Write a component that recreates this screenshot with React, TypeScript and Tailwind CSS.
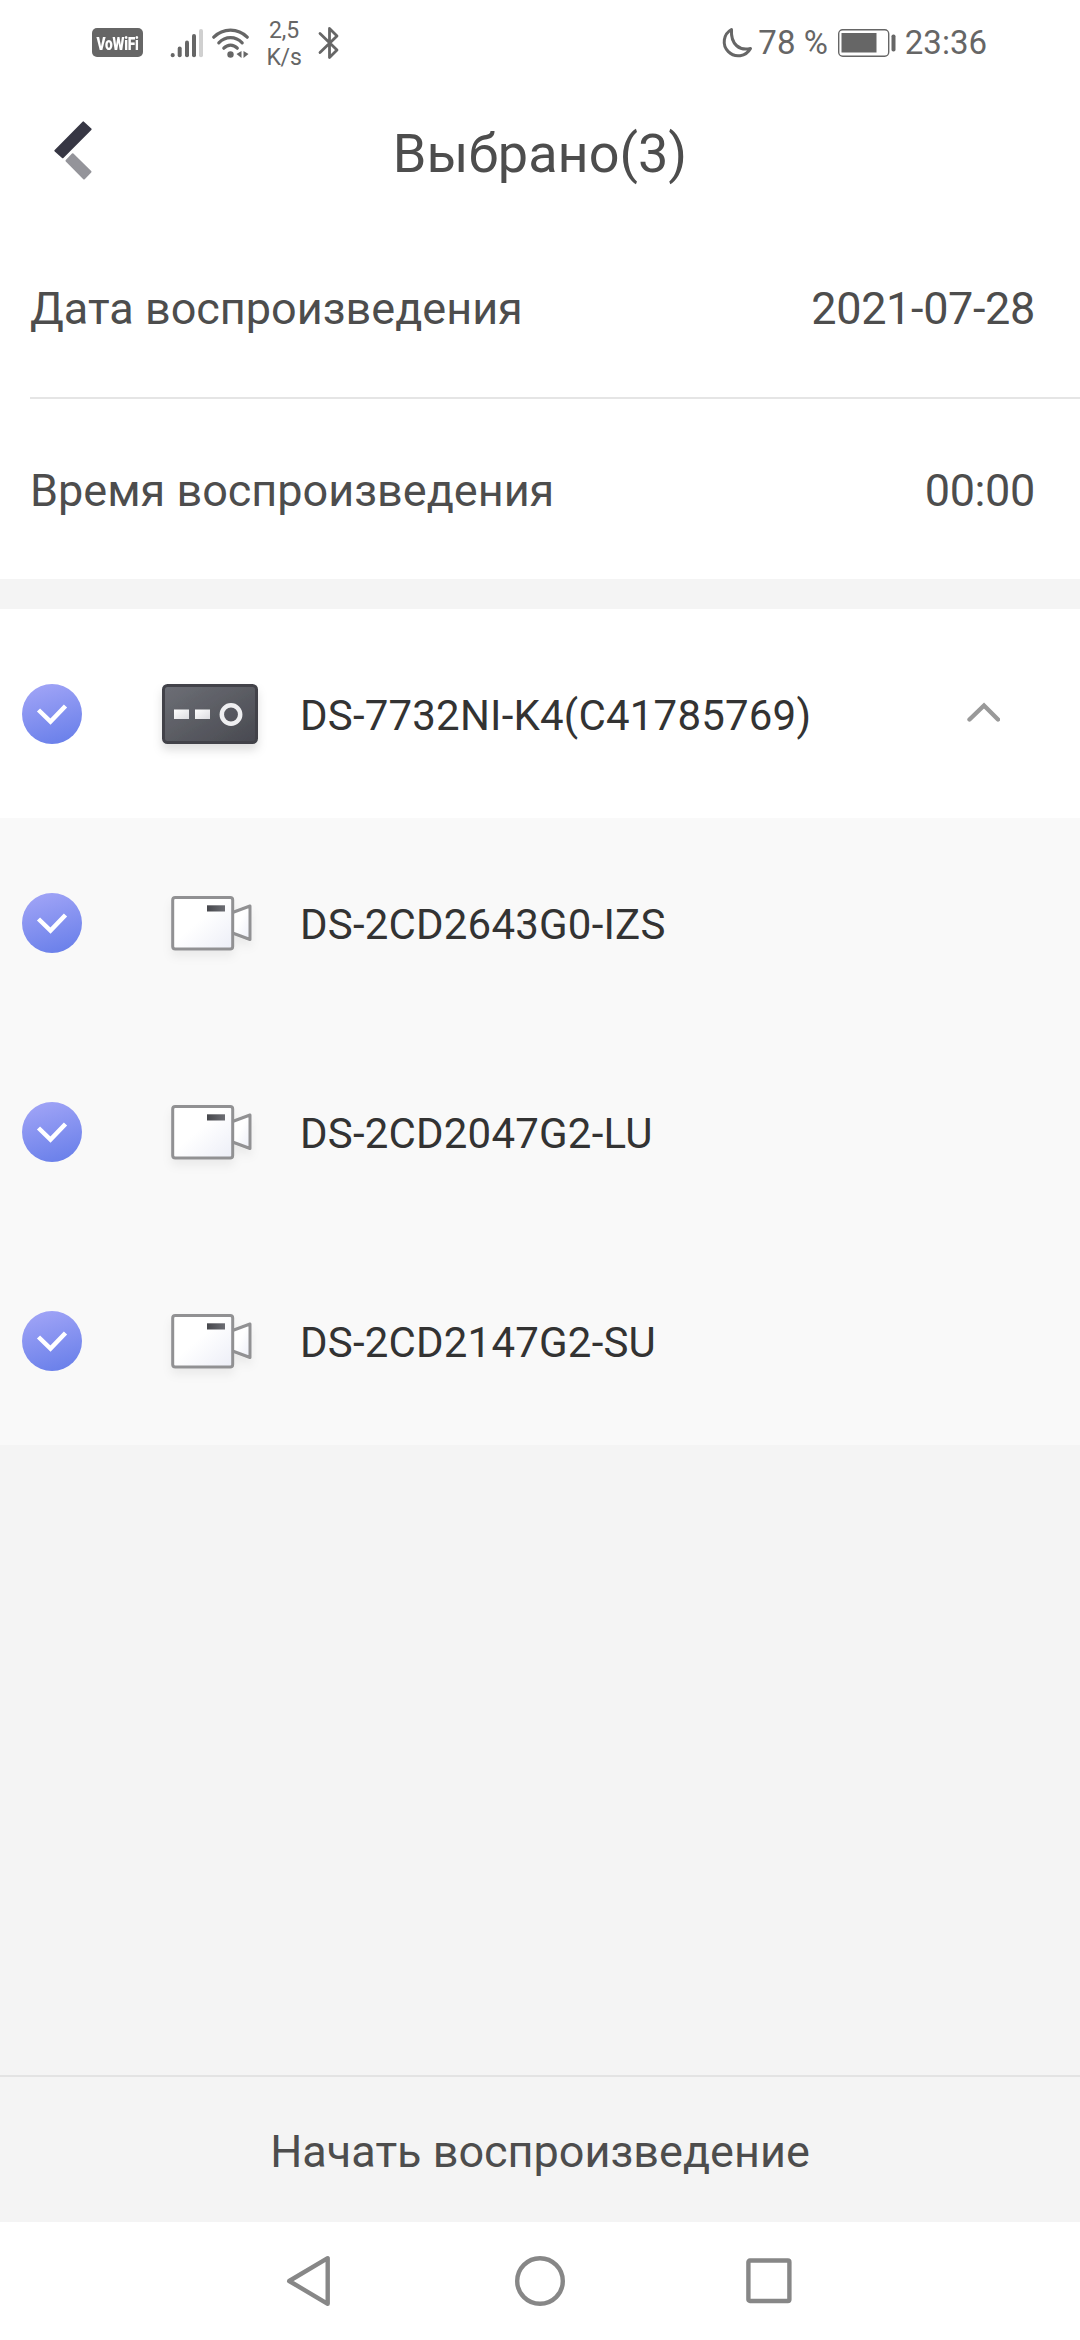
type Device = {
  name: string;
  kind: "recorder" | "camera";
};

const recorder: Device = { name: "DS-7732NI-K4(C41785769)", kind: "recorder" };

const cameras: Device[] = [
  { name: "DS-2CD2643G0-IZS", kind: "camera" },
  { name: "DS-2CD2047G2-LU", kind: "camera" },
  { name: "DS-2CD2147G2-SU", kind: "camera" },
];

function SignalIcon() {
  return (
    <svg width="34" height="32" viewBox="0 0 34 32" aria-hidden="true">
      <g strokeWidth="4" strokeLinecap="round" stroke="#666">
        <path d="M2.7 28v.2" />
        <path d="M9.7 21.5v6.7" />
        <path d="M17 15.5v12.7" />
        <path d="M24 9v19.2" />
        <path d="M31 4v24.2" stroke="#d0d0d0" />
      </g>
    </svg>
  );
}

function WifiIcon() {
  return (
    <svg width="37" height="32" viewBox="0 0 37 32" fill="none" aria-hidden="true">
      <g stroke="#666" strokeWidth="3.2" strokeLinecap="round">
        <path d="M1.8 10.2C11 0.8 26 0.8 35.2 10.2" />
        <path d="M6.8 15.8C13.5 9 23.5 9 30.2 15.8" />
        <path d="M11.8 21.2C15.8 17 21.3 17 25.3 21.2" />
      </g>
      <circle cx="18.5" cy="27.5" r="3.2" fill="#666" />
      <path d="M29.5 24v7l-5-4zM31.5 24l5 3-5 4z" fill="#666" />
    </svg>
  );
}

function BluetoothIcon() {
  return (
    <svg width="22" height="34" viewBox="0 0 22 34" fill="none" aria-hidden="true">
      <path
        d="M2 7.5 19 24 11.5 31.5V2.5L19 10 2 26.5"
        stroke="#666"
        strokeWidth="2.8"
        strokeLinecap="round"
        strokeLinejoin="round"
      />
    </svg>
  );
}

function MoonIcon() {
  return (
    <svg width="32" height="32" viewBox="0 0 32 32" fill="none" aria-hidden="true">
      <path
        d="M10.5 2.5A14 14 0 1 0 29.5 21.5C19 24 9.5 18 10.5 2.5Z"
        stroke="#666"
        strokeWidth="3"
        strokeLinejoin="round"
      />
    </svg>
  );
}

function BatteryIcon() {
  return (
    <svg width="58" height="28" viewBox="0 0 58 28" fill="none" aria-hidden="true">
      <rect x="0.7" y="0.7" width="50" height="26.6" rx="4" stroke="#666" strokeWidth="1.4" />
      <rect x="3.5" y="4" width="35" height="19.5" fill="#666" />
      <rect x="53.5" y="5.5" width="4" height="17" rx="1.8" fill="#666" />
    </svg>
  );
}

function StatusBar() {
  return (
    <div className="flex h-[85px] items-center pl-[92px] pr-[93px] text-[#666]">
      <div className="flex h-[29px] w-[51px] items-center justify-center rounded-[5px] bg-[#666]">
        <span className="scale-x-[0.98] scale-y-[1.35] text-[14px] font-black leading-[20px] tracking-[-0.2px] text-white">
          VoWiFi
        </span>
      </div>
      <div className="ml-[27px]">
        <SignalIcon />
      </div>
      <div className="ml-2">
        <WifiIcon />
      </div>
      <div className="ml-[17px] w-9 pt-[3px] text-center text-[23px] leading-[27px] tracking-[-0.2px]">
        <div>2,5</div>
        <div>K/s</div>
      </div>
      <div className="ml-4">
        <BluetoothIcon />
      </div>
      <div className="ml-auto flex items-center">
        <MoonIcon />
        <span className="ml-[5px] pt-px text-[33px]">78 %</span>
        <div className="ml-2.5">
          <BatteryIcon />
        </div>
        <span className="ml-[9px] pt-px text-[33px]">23:36</span>
      </div>
    </div>
  );
}

function Header() {
  return (
    <header className="relative flex h-[138px] items-center justify-center">
      <button type="button" aria-label="Назад" className="absolute left-[54px] top-[35px]">
        <svg width="40" height="62" viewBox="0 0 40 62" strokeWidth="2" strokeLinejoin="round">
          <path d="M18.7 34.2 12.5 40.7 30 58.5 36.5 51.7z" fill="#94949a" stroke="#94949a" />
          <path d="M29.3 2.4 36.6 9.3 8.7 37.3 1.4 30.7z" fill="#373744" stroke="#373744" />
        </svg>
      </button>
      <h1 className="text-[54px] leading-none text-[#4d4d4d]">Выбрано(3)</h1>
    </header>
  );
}

function SettingRow({ label, value }: { label: string; value: string }) {
  return (
    <div className="flex h-full items-center justify-between pr-[45px]">
      <span>{label}</span>
      <span className="tracking-[-0.35px]">{value}</span>
    </div>
  );
}

function CheckBadge() {
  return (
    <svg width="60" height="60" viewBox="0 0 60 60" fill="none" aria-hidden="true">
      <defs>
        <linearGradient id="badge" x1="0.35" y1="0" x2="0.65" y2="1">
          <stop offset="0" stopColor="#9fa3f6" />
          <stop offset="1" stopColor="#6a80ea" />
        </linearGradient>
      </defs>
      <circle cx="30" cy="30" r="30" fill="url(#badge)" />
      <path d="M16.5 26 28.5 37.5 43.5 22" stroke="#fff" strokeWidth="4.5" />
    </svg>
  );
}

function RecorderIcon() {
  return (
    <svg width="120" height="90" viewBox="0 0 120 90" fill="none" aria-hidden="true">
      <defs>
        <linearGradient id="recorder" x1="0" y1="0" x2="1" y2="1">
          <stop offset="0" stopColor="#6d6f76" />
          <stop offset="1" stopColor="#484950" />
        </linearGradient>
        <linearGradient id="slot" x1="0" y1="0" x2="1" y2="1">
          <stop offset="0" stopColor="#fff" />
          <stop offset="1" stopColor="#dcdce0" />
        </linearGradient>
        <filter id="recorder-shadow" x="-20%" y="-20%" width="140%" height="160%">
          <feDropShadow dx="0" dy="6" stdDeviation="5" floodColor="#000" floodOpacity="0.13" />
        </filter>
      </defs>
      <rect
        x="13.5"
        y="16.5"
        width="93"
        height="57"
        rx="4"
        fill="url(#recorder)"
        stroke="#42434a"
        strokeWidth="3"
        filter="url(#recorder-shadow)"
      />
      <rect x="24" y="40.5" width="15" height="9.5" fill="url(#slot)" />
      <rect x="45" y="40.5" width="15" height="9.5" fill="url(#slot)" />
      <circle cx="81" cy="45.5" r="9.2" stroke="#efeff1" strokeWidth="4.5" />
    </svg>
  );
}

function CameraIcon() {
  return (
    <svg width="120" height="90" viewBox="0 0 120 90" fill="none" aria-hidden="true">
      <defs>
        <linearGradient id="camera" x1="0.2" y1="0.2" x2="1" y2="1">
          <stop offset="0.3" stopColor="#fff" />
          <stop offset="1" stopColor="#eceef7" />
        </linearGradient>
        <linearGradient id="camera-mark" x1="0" y1="0" x2="1" y2="0">
          <stop offset="0" stopColor="#46474c" />
          <stop offset="1" stopColor="#6c6d73" />
        </linearGradient>
        <filter id="camera-shadow" x="-20%" y="-20%" width="140%" height="160%">
          <feDropShadow dx="0" dy="6" stdDeviation="5" floodColor="#000" floodOpacity="0.06" />
        </filter>
      </defs>
      <g stroke="#919193" strokeWidth="3" strokeLinejoin="round" filter="url(#camera-shadow)">
        <path d="M82.5 34.5 100 28V61.5L82.5 55z" fill="url(#camera)" />
        <rect x="22.7" y="19.5" width="60" height="51.5" rx="2.5" fill="url(#camera)" />
      </g>
      <rect x="57" y="27.3" width="18" height="6.2" fill="url(#camera-mark)" />
    </svg>
  );
}

function DeviceRow({ device, expanded }: { device: Device; expanded?: boolean }) {
  return (
    <li className="flex h-[209px] items-center pl-[22px] pr-[80px]">
      <CheckBadge />
      <div className="ml-[68px]">
        {device.kind === "recorder" ? <RecorderIcon /> : <CameraIcon />}
      </div>
      <span className="ml-[30px] pt-[5px] text-[42px] leading-none tracking-[0.2px] text-[#333]">
        {device.name}
      </span>
      {expanded && (
        <svg className="ml-auto" width="34" height="24" viewBox="0 0 34 24" fill="none" aria-hidden="true">
          <path d="M3.5 17.5 18 3.5 32 17.5" stroke="#999" strokeWidth="4.4" strokeLinecap="round" />
        </svg>
      )}
    </li>
  );
}

function NavigationBar() {
  return (
    <nav className="flex h-[118px] items-center justify-center gap-[180px] bg-white">
      <svg width="50" height="52" viewBox="0 0 50 52" fill="none" stroke="#878787" strokeWidth="4.4" strokeLinejoin="round">
        <path d="M42.7 3.2V48.8L4.2 26z" />
      </svg>
      <svg width="50" height="52" viewBox="0 0 50 52" fill="none" stroke="#878787" strokeWidth="4.4">
        <circle cx="25" cy="26" r="22.8" />
      </svg>
      <svg width="50" height="52" viewBox="0 0 50 52" fill="none" stroke="#878787" strokeWidth="4.4">
        <rect x="3.4" y="5.5" width="41" height="40.5" rx="1.5" />
      </svg>
    </nav>
  );
}

export default function App() {
  return (
    <div className="flex h-[2340px] w-[1080px] flex-col overflow-hidden bg-[#f4f4f4] font-['Roboto',sans-serif]">
      <div className="bg-white">
        <StatusBar />
        <Header />
        <section className="pl-[30px] text-[45px] leading-none text-[#4d4d4d]">
          <div className="h-[176px] border-b-2 border-[#e5e5e5] pb-[3px]">
            <SettingRow label="Дата воспроизведения" value="2021-07-28" />
          </div>
          <div className="h-[180px] pt-[3px]">
            <SettingRow label="Время воспроизведения" value="00:00" />
          </div>
        </section>
      </div>

      <ul className="mt-[30px] bg-white">
        <DeviceRow device={recorder} expanded />
      </ul>
      <ul className="bg-[#f9f9f9]">
        {cameras.map((camera) => (
          <DeviceRow key={camera.name} device={camera} />
        ))}
      </ul>

      <button
        type="button"
        className="mt-auto h-[147px] border-t-2 border-[#e3e3e3] pt-[3px] text-[45px] leading-none text-[#4d4d4d]"
      >
        Начать воспроизведение
      </button>
      <NavigationBar />
    </div>
  );
}
